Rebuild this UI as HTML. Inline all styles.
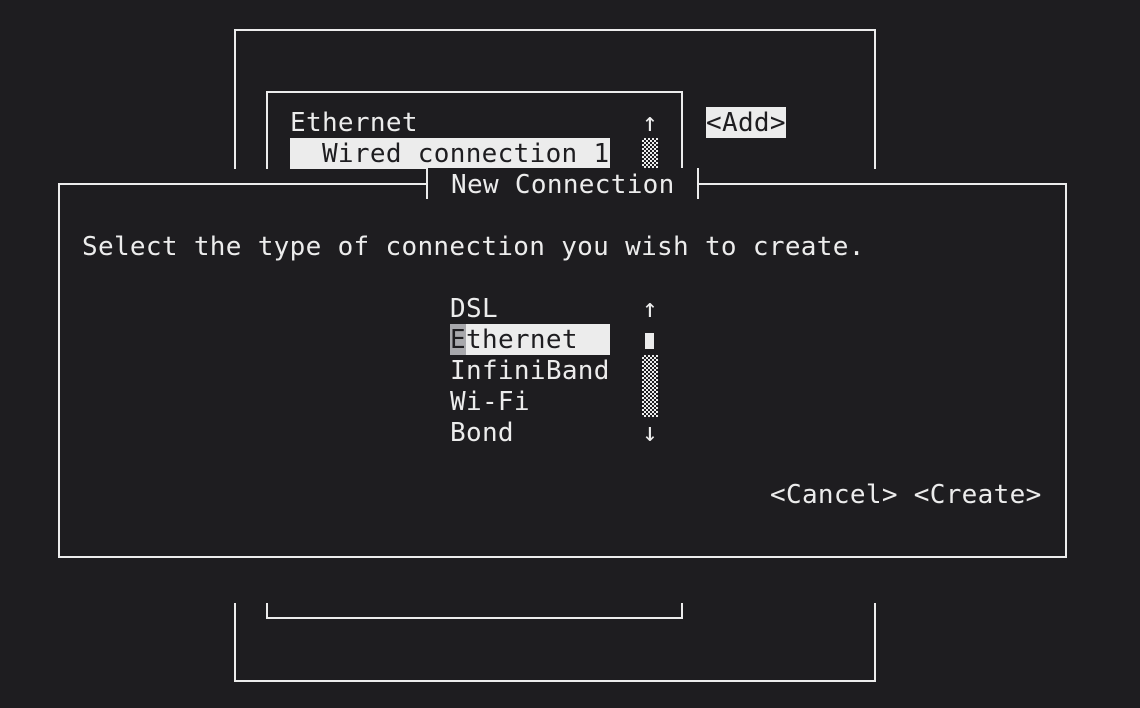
<!DOCTYPE html>
<html><head><meta charset="utf-8"><style>
body{margin:0;width:1140px;height:708px;background:#1e1d20;overflow:hidden;position:relative;font-family:"DejaVu Sans Mono","Liberation Mono",monospace;font-size:26px;color:#ececec}
.l{position:absolute;background:#ececec}
.t{position:absolute;line-height:33px;height:31px;white-space:pre;letter-spacing:0.32px;overflow:visible}
.chk{position:absolute;background:repeating-conic-gradient(#ececec 0 25%,#1e1d20 0 50%) 0 0/4px 4px}
</style></head><body>
<div class="l" style="left:234px;top:29px;width:642px;height:2px"></div>
<div class="l" style="left:234px;top:29px;width:2px;height:140px"></div>
<div class="l" style="left:874px;top:29px;width:2px;height:140px"></div>
<div class="l" style="left:234px;top:603px;width:2px;height:79px"></div>
<div class="l" style="left:874px;top:603px;width:2px;height:79px"></div>
<div class="l" style="left:234px;top:680px;width:642px;height:2px"></div>
<div class="l" style="left:266px;top:91px;width:417px;height:2px"></div>
<div class="l" style="left:266px;top:91px;width:2px;height:78px"></div>
<div class="l" style="left:681px;top:91px;width:2px;height:78px"></div>
<div class="l" style="left:266px;top:603px;width:2px;height:16px"></div>
<div class="l" style="left:681px;top:603px;width:2px;height:16px"></div>
<div class="l" style="left:266px;top:617px;width:417px;height:2px"></div>
<div class="t" style="left:290px;top:107px">Ethernet</div>
<div class="t" style="left:290px;top:138px;width:320px;background:#ececec;color:#1e1d20">  Wired connection 1</div>
<div class="t" style="left:642px;top:107px">↑</div>
<div class="chk" style="left:642px;top:138px;width:16px;height:31px"></div>
<div class="t" style="left:706px;top:107px;width:80px;background:#ececec;color:#1e1d20">&lt;Add&gt;</div>
<div class="l" style="left:58px;top:183px;width:1009px;height:2px"></div>
<div class="l" style="left:58px;top:183px;width:2px;height:375px"></div>
<div class="l" style="left:1065px;top:183px;width:2px;height:375px"></div>
<div class="l" style="left:58px;top:556px;width:1009px;height:2px"></div>
<div style="position:absolute;left:428px;top:168px;width:270px;height:31px;background:#1e1d20"></div>
<div class="l" style="left:426px;top:168px;width:2px;height:31px"></div>
<div class="l" style="left:697px;top:168px;width:2px;height:31px"></div>
<div class="t" style="left:451px;top:169px">New Connection</div>
<div class="t" style="left:82px;top:231px">Select the type of connection you wish to create.</div>
<div class="t" style="left:450px;top:293px">DSL</div>
<div class="t" style="left:450px;top:324px;width:160px;background:#ececec;color:#1e1d20"><span style="background:#a8a8ac;display:inline-block;width:16px;height:31px">E</span>thernet</div>
<div class="t" style="left:450px;top:355px">InfiniBand</div>
<div class="t" style="left:450px;top:386px">Wi-Fi</div>
<div class="t" style="left:450px;top:417px">Bond</div>
<div class="t" style="left:642px;top:293px">↑</div>
<div class="l" style="left:645px;top:333px;width:9px;height:16px"></div>
<div class="chk" style="left:642px;top:355px;width:16px;height:62px"></div>
<div class="t" style="left:642px;top:417px">↓</div>
<div class="t" style="left:770px;top:479px">&lt;Cancel&gt; &lt;Create&gt;</div>
</body></html>
